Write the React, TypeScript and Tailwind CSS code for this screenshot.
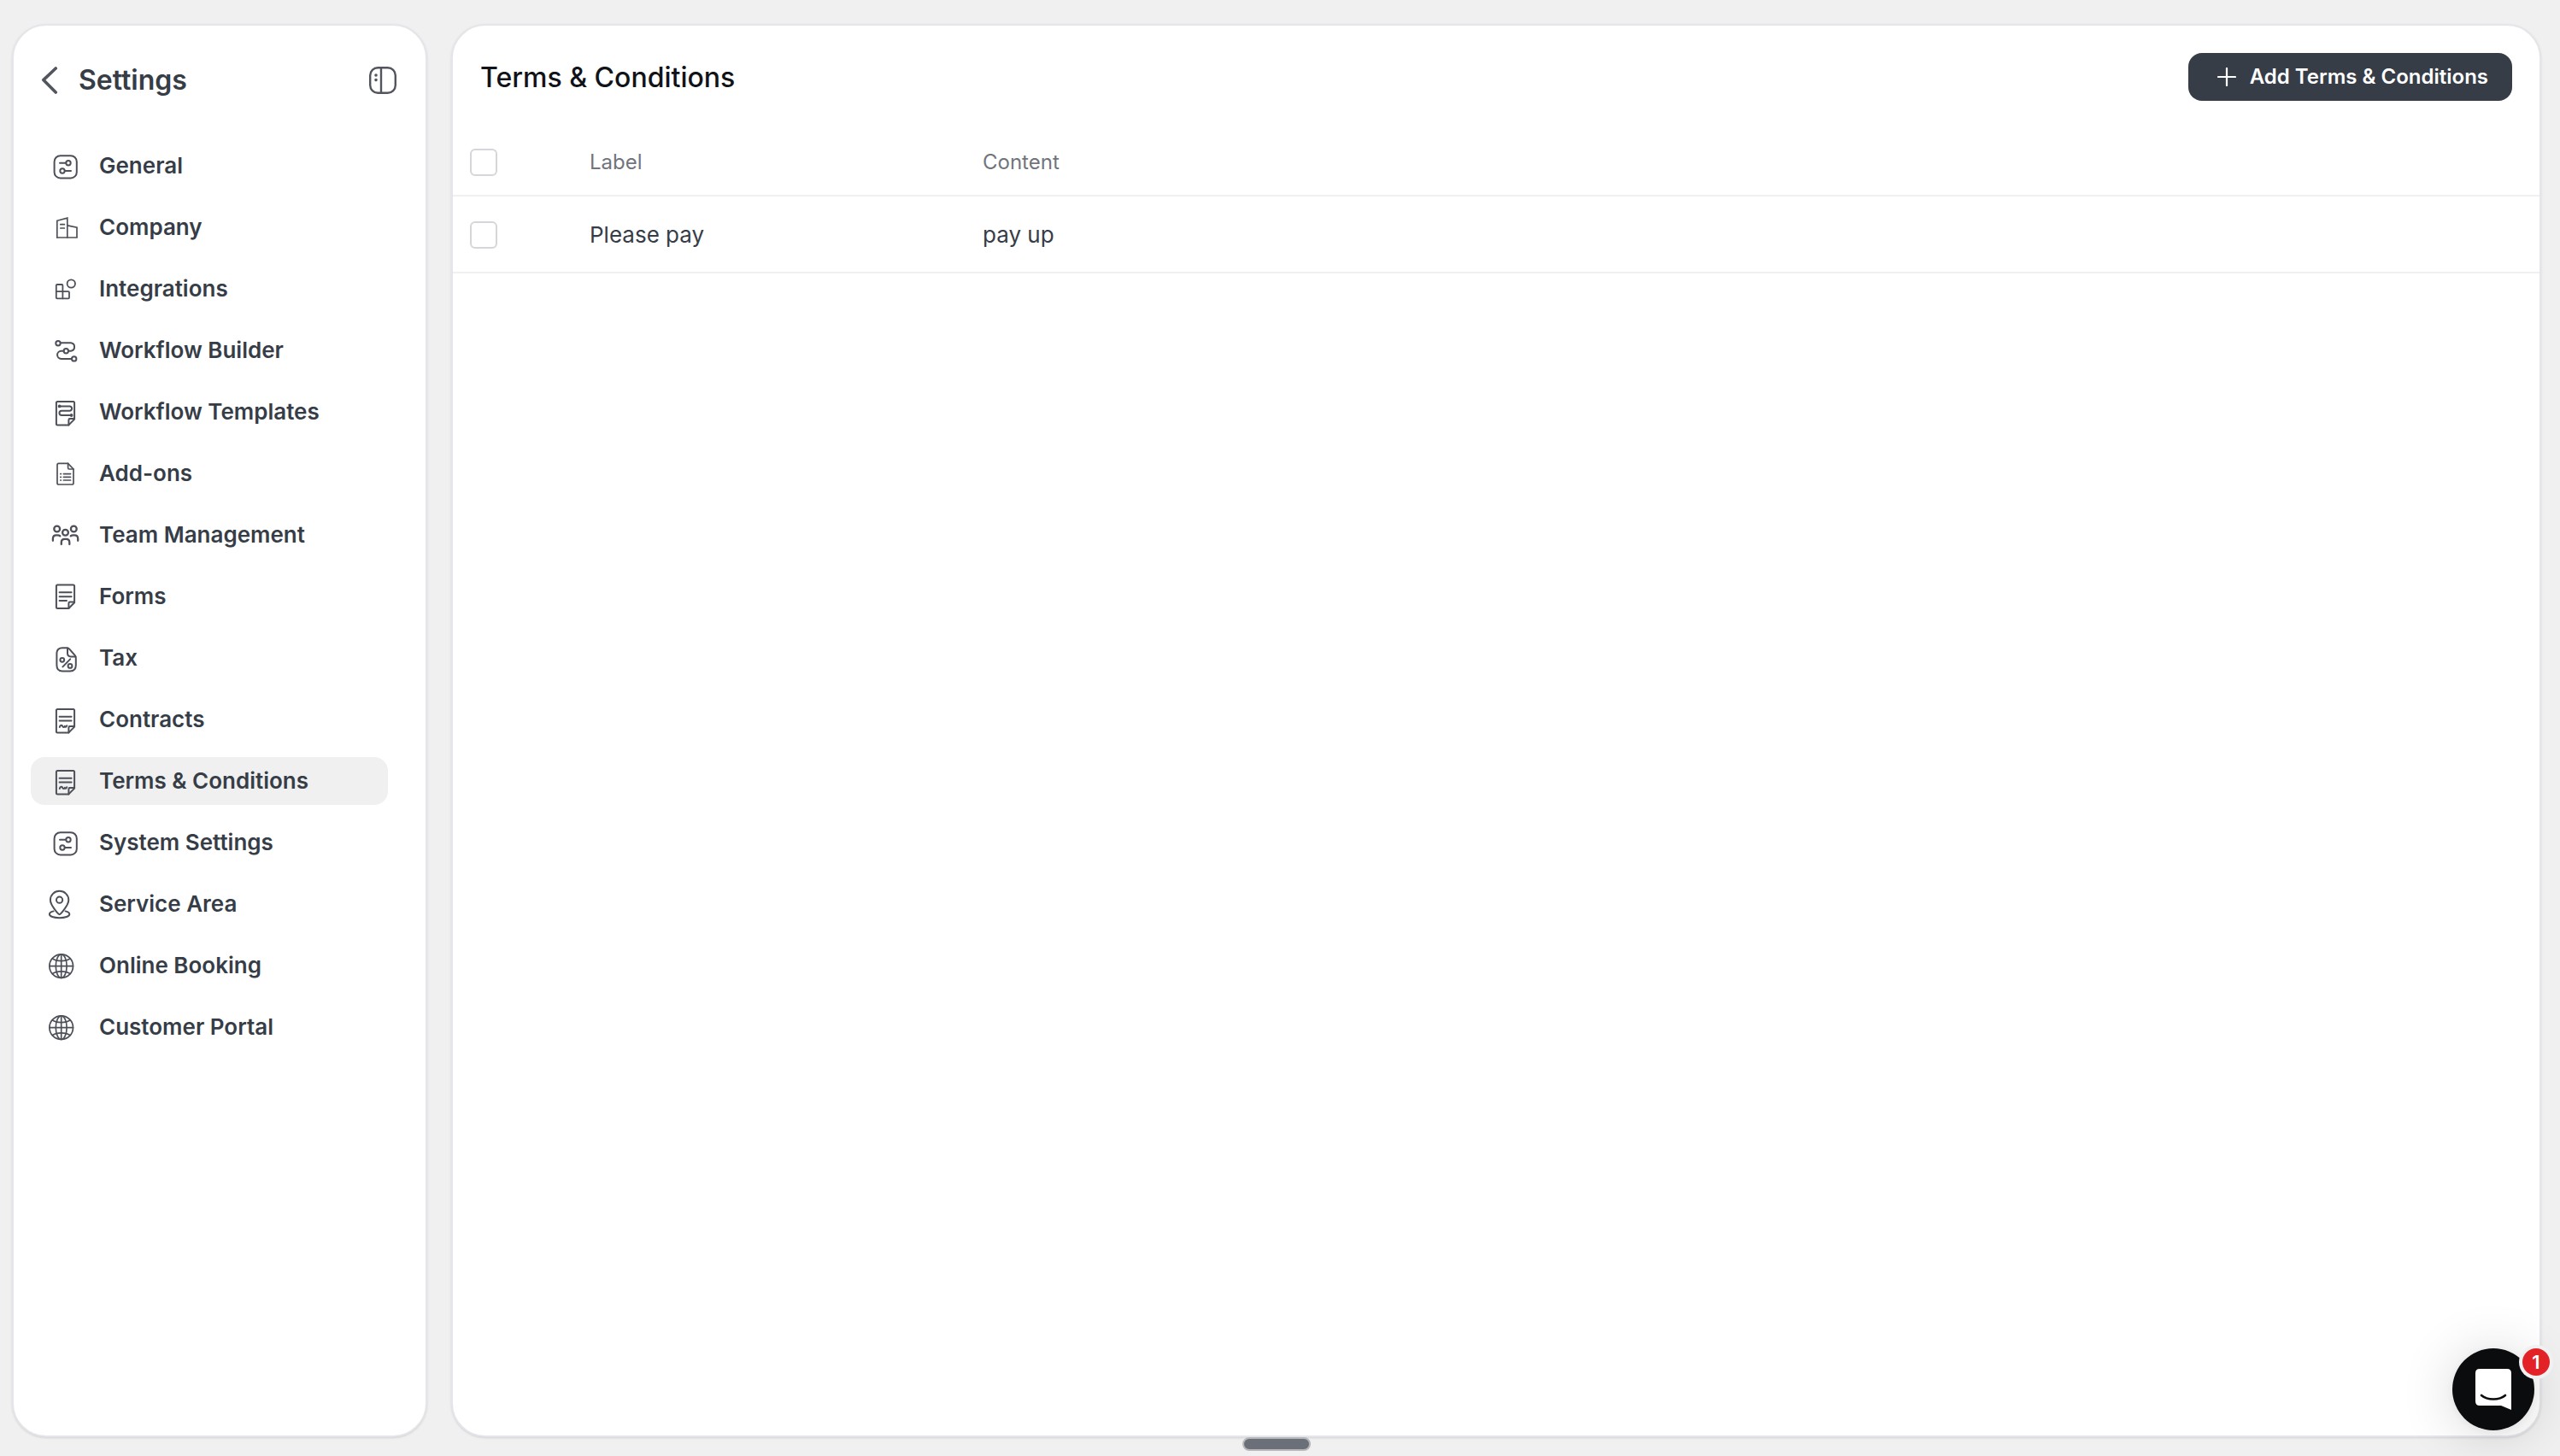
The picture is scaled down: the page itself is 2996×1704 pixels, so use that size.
import { useState } from "react";
import type { ReactNode } from "react";
import clsx from "clsx";

function Icon({ children }: { children: ReactNode }) {
    return (
        <svg
            viewBox="0 0 40 40"
            className="w-10 h-10 shrink-0 text-[#4d5059]"
            fill="none"
            stroke="currentColor"
            strokeWidth={2}
            strokeLinecap="round"
            strokeLinejoin="round"
            aria-hidden="true"
        >
            {children}
        </svg>
    );
}

// sheet of paper with a folded bottom right corner
function Sheet({ children }: { children: ReactNode }) {
    return (
        <>
            <path d="M11.4 8 H29.6 Q31.1 8 31.1 9.5 V28.6 L24.4 35.4 H11.4 Q9.9 35.4 9.9 33.9 V9.5 Q9.9 8 11.4 8 Z" />
            <path d="M24.4 35.4 V29.4 Q24.4 28 25.8 28 H31.1" />
            {children}
        </>
    );
}

function SlidersIcon() {
    return (
        <Icon>
            <rect x="7.6" y="8.2" width="26.2" height="26.2" rx="7" />
            <path d="M14 16.7 H21 M20 26 H27" />
            <circle cx="24" cy="16.7" r="2.7" />
            <circle cx="17" cy="26" r="2.7" />
        </Icon>
    );
}

function CompanyIcon() {
    return (
        <Icon>
            <g strokeWidth={1.7} strokeLinejoin="miter">
                <path d="M10.8 32 V12.3 L22.8 9.2 V32" />
                <path d="M22.8 17.8 L34 20.2 V32 H10.8" />
                <path d="M14.8 16.7 H19.4 M14.8 21 H19.4" />
            </g>
        </Icon>
    );
}

function IntegrationsIcon() {
    return (
        <Icon>
            <g strokeWidth={1.8}>
                <path d="M11 15 H16.4 Q17.4 15 17.4 16 V23.2 H24 Q25 23.2 25 24.2 V30.3 Q25 31.3 24 31.3 H11 Q9.8 31.3 9.8 30.3 V16 Q9.8 15 11 15 Z" />
                <path d="M9.8 23.2 H17.4 V31.3" />
                <circle cx="27.3" cy="14" r="4.7" />
            </g>
        </Icon>
    );
}

function WorkflowIcon() {
    return (
        <Icon>
            <circle cx="12" cy="11.7" r="2.7" />
            <circle cx="21.3" cy="20.8" r="2.7" />
            <circle cx="30.7" cy="29.9" r="2.7" />
            <path d="M14.8 11.3 H27 A4.8 4.8 0 0 1 27 20.8 H24.2" />
            <path d="M18.4 20.8 H15.6 A4.5 4.5 0 0 0 15.6 29.9 H27.8" />
        </Icon>
    );
}

function TemplatesIcon() {
    return (
        <Icon>
            <Sheet>
                <path d="M13.6 13.4 H25.9 A2.7 2.7 0 0 1 25.9 18.7 H16.1 A2.6 2.6 0 0 0 16.1 24 H27.4" />
                <circle cx="13.6" cy="13.4" r="0.9" fill="currentColor" />
                <circle cx="27.6" cy="24" r="0.9" fill="currentColor" />
            </Sheet>
        </Icon>
    );
}

function AddonsIcon() {
    return (
        <Icon>
            <g strokeWidth={1.7}>
                <path d="M12.6 8.4 H23.6 L30 15 V31.2 Q30 33 28.2 33 H12.6 Q11 33 11 31.2 V10.2 Q11 8.4 12.6 8.4 Z" />
                <path d="M23.6 8.4 V13.6 Q23.6 15 25 15 H30" />
                <path d="M18.4 20.6 H26.6 M18.4 24.3 H26.6 M18.4 28 H26.6 M14.8 20.6 H15.4 M14.8 24.3 H15.4 M14.8 28 H15.4" />
            </g>
        </Icon>
    );
}

function TeamIcon() {
    return (
        <Icon>
            <g strokeWidth={2.3}>
                <circle cx="10.7" cy="13" r="3.4" />
                <circle cx="30.3" cy="13" r="3.4" />
                <circle cx="20.5" cy="17.2" r="3.4" />
                <path d="M5.9 26.8 V24.4 Q5.9 20.4 9.9 20.4 H11.6 Q13.2 20.4 14.3 21.2" />
                <path d="M35.2 26.8 V24.4 Q35.2 20.4 31.2 20.4 H29.5 Q27.9 20.4 26.8 21.2" />
                <path d="M15.8 31 V28.8 Q15.8 24.9 19.7 24.9 H21.4 Q25.3 24.9 25.3 28.8 V31" />
            </g>
        </Icon>
    );
}

function FormsIcon() {
    return (
        <Icon>
            <g transform="translate(0 -1.4)">
                <Sheet>
                    <path d="M13.6 16.7 H27.6 M13.6 21.6 H27.6 M13.6 26.4 H22" />
                </Sheet>
            </g>
        </Icon>
    );
}

function TaxIcon() {
    return (
        <Icon>
            <path d="M17 8.2 H22.4 Q24 8.2 25 9.4 L31.6 16.8 Q32.8 18.2 32.8 20 V28.6 Q32.8 35.5 26 35.5 H17 Q10.4 35.5 10.4 28.6 V15 Q10.4 8.2 17 8.2 Z" />
            <path d="M23 8.6 V14.6 Q23 18.4 26.8 18.4 H32.4" />
            <circle cx="16.8" cy="22.3" r="2.4" />
            <circle cx="26" cy="29.4" r="2.4" />
            <path d="M26.2 21.4 L17.4 30.4" />
        </Icon>
    );
}

function ContractIcon() {
    return (
        <Icon>
            <Sheet>
                <path d="M13.6 16.8 H27.6 M13.6 21.6 H27.6" />
                <path d="M13.8 29 C14.2 26.8 16 26 17 27.6 C17.8 29.4 19.2 29.4 19.8 27.8 C20.4 29.2 21.6 29 22.2 27.2" />
            </Sheet>
        </Icon>
    );
}

function PinIcon() {
    return (
        <Icon>
            <path d="M13.6 32.2 C12.6 32.2 2.9 21.6 2.9 15.2 A10.7 10.4 0 0 1 24.3 15.2 C24.3 21.6 14.6 32.2 13.6 32.2 Z" />
            <circle cx="13.6" cy="15.2" r="3.6" />
            <path d="M6.6 28.4 C3.6 29.2 1.9 30.4 1.9 31.9 C1.9 34.4 7 36.2 13.6 36.2 C20.2 36.2 25.3 34.4 25.3 31.9 C25.3 30.4 23.6 29.2 20.6 28.4" />
        </Icon>
    );
}

function GlobeIcon() {
    return (
        <Icon>
            <g strokeWidth={1.7}>
                <circle cx="15.7" cy="20.7" r="13.8" />
                <ellipse cx="15.7" cy="20.7" rx="6.4" ry="13.8" />
                <path d="M15.7 6.9 V34.5 M1.9 20.7 H29.5" />
                <path d="M5.2 11.8 C8 13.8 11.5 14.6 15.7 14.6 C19.9 14.6 23.4 13.8 26.2 11.8" />
                <path d="M5.2 29.6 C8 27.6 11.5 26.8 15.7 26.8 C19.9 26.8 23.4 27.6 26.2 29.6" />
            </g>
        </Icon>
    );
}

const navItems = [
    { label: "General", icon: <SlidersIcon /> },
    { label: "Company", icon: <CompanyIcon /> },
    { label: "Integrations", icon: <IntegrationsIcon /> },
    { label: "Workflow Builder", icon: <WorkflowIcon /> },
    { label: "Workflow Templates", icon: <TemplatesIcon /> },
    { label: "Add-ons", icon: <AddonsIcon /> },
    { label: "Team Management", icon: <TeamIcon /> },
    { label: "Forms", icon: <FormsIcon /> },
    { label: "Tax", icon: <TaxIcon /> },
    { label: "Contracts", icon: <ContractIcon /> },
    { label: "Terms & Conditions", icon: <ContractIcon /> },
    { label: "System Settings", icon: <SlidersIcon /> },
    { label: "Service Area", icon: <PinIcon /> },
    { label: "Online Booking", icon: <GlobeIcon /> },
    { label: "Customer Portal", icon: <GlobeIcon /> },
];

const terms = [{ id: 1, label: "Please pay", content: "pay up" }];

function Sidebar() {
    const active = "Terms & Conditions";

    return (
        <aside className="w-[486px] shrink-0 bg-white border-2 border-[#e5e6eb] rounded-[40px] shadow-sm">
            <div className="flex items-center gap-6 px-8 pt-12">
                <button aria-label="Back" className="text-[#52555e]">
                    <svg viewBox="0 0 20 32" className="w-5 h-8" fill="none" stroke="currentColor" strokeWidth={3.6} strokeLinecap="round" strokeLinejoin="round">
                        <path d="M17.2 2 L2.8 15.6 L17.2 30" />
                    </svg>
                </button>
                <h2 className="flex-1 text-[32px] leading-8 font-semibold text-[#363d47]">Settings</h2>
                <button aria-label="Toggle sidebar" className="text-[#52555e]">
                    <svg viewBox="0 0 34 32" className="w-[34px] h-8" fill="none" stroke="currentColor" strokeWidth={2.4}>
                        <rect x="1.2" y="1.2" width="29.6" height="29.6" rx="9" />
                        <path d="M14 1 V31" />
                        <circle cx="8" cy="10" r="1" fill="currentColor" strokeWidth={1.6} />
                        <circle cx="8" cy="15.6" r="1" fill="currentColor" strokeWidth={1.6} />
                    </svg>
                </button>
            </div>
            <nav className="flex flex-col gap-4 pt-14 pl-5 pr-11">
                {navItems.map((item) => (
                    <a
                        key={item.label}
                        href="#"
                        className={clsx(
                            "flex items-center gap-5 h-14 pl-5 rounded-2xl text-[26px] leading-8 font-semibold text-[#363d47]",
                            item.label === active && "bg-[#f0f0f0]"
                        )}
                    >
                        {item.icon}
                        {item.label}
                    </a>
                ))}
            </nav>
        </aside>
    );
}

function Checkbox({ label, checked, onChange }: { label: string; checked: boolean; onChange: () => void }) {
    return (
        <input
            type="checkbox"
            aria-label={label}
            checked={checked}
            onChange={onChange}
            className="block w-8 h-8 appearance-none rounded-md border-2 border-[#d5d6da] bg-white checked:bg-[#363d47]"
        />
    );
}

function TermsTable() {
    const [selected, setSelected] = useState<number[]>([]);
    const allSelected = selected.length === terms.length;

    const toggle = (id: number) => {
        setSelected((prev) => (prev.includes(id) ? prev.filter((x) => x !== id) : [...prev, id]));
    };

    return (
        <table className="w-full table-fixed border-separate border-spacing-0 text-left">
            <thead>
                <tr className="h-20 text-2xl text-[#71747c]">
                    <th className="w-40 pl-5 pt-0.5 border-b-2 border-[#f0f0f0]">
                        <Checkbox
                            label="Select all"
                            checked={allSelected}
                            onChange={() => setSelected(allSelected ? [] : terms.map((t) => t.id))}
                        />
                    </th>
                    <th className="w-[460px] pt-0.5 font-normal border-b-2 border-[#f0f0f0]">Label</th>
                    <th className="pt-0.5 font-normal border-b-2 border-[#f0f0f0]">Content</th>
                </tr>
            </thead>
            <tbody>
                {terms.map((term) => (
                    <tr key={term.id} className="h-[90px] text-[26px] leading-8 text-[#363d47]">
                        <td className="pl-5 pt-0.5 border-b-2 border-[#f0f0f0]">
                            <Checkbox
                                label={`Select ${term.label}`}
                                checked={selected.includes(term.id)}
                                onChange={() => toggle(term.id)}
                            />
                        </td>
                        <td className="pt-0.5 border-b-2 border-[#f0f0f0]">{term.label}</td>
                        <td className="pt-0.5 border-b-2 border-[#f0f0f0]">{term.content}</td>
                    </tr>
                ))}
            </tbody>
        </table>
    );
}

function ChatLauncher() {
    return (
        <div className="fixed right-[30px] bottom-[30px]">
            <button
                aria-label="Open chat"
                className="flex items-center justify-center w-24 h-24 rounded-full bg-[#0b0c0e] shadow-[0_2px_12px_rgba(0,0,0,0.06),0_4px_64px_rgba(0,0,0,0.16)]"
            >
                <svg viewBox="0 0 42 48" className="w-[42px] h-12">
                    <path d="M5 0 H37 Q42 0 42 5 V48 L30 43 H5 Q0 43 0 38 V5 Q0 0 5 0 Z" fill="#fff" />
                    <path d="M7 31 C14 37 28 37 35 31" fill="none" stroke="#0b0c0e" strokeWidth={2.6} strokeLinecap="round" />
                </svg>
            </button>
            <span className="absolute -top-1 -right-[22px] flex items-center justify-center w-10 h-10 rounded-full bg-[#f1f1f1]">
                <span className="flex items-center justify-center w-8 h-8 rounded-full bg-[#e32227] text-[22px] leading-8 font-semibold text-white">
                    1
                </span>
            </span>
        </div>
    );
}

export default function App() {
    return (
        <div className="flex flex-col min-h-screen pt-7 pl-3.5 pr-[22px] bg-[#f0f0f0] font-['Inter',sans-serif]">
            <div className="flex flex-1 gap-7">
                <Sidebar />
                <main className="flex-1 min-w-0 bg-white border-2 border-[#e5e6eb] rounded-[40px] shadow-sm">
                    <div className="flex items-center justify-between h-[120px] px-8">
                        <h1 className="pt-0.5 text-[32px] leading-10 font-medium text-[#111319]">Terms &amp; Conditions</h1>
                        <button className="flex items-center gap-4 h-14 pl-[34px] pr-7 rounded-2xl bg-[#363d47] text-2xl font-semibold text-white">
                            <svg viewBox="0 0 22 22" className="w-[22px] h-[22px]" fill="none" stroke="currentColor" strokeWidth={2.2} strokeLinecap="round">
                                <path d="M11 1 V21 M1 11 H21" />
                            </svg>
                            Add Terms &amp; Conditions
                        </button>
                    </div>
                    <TermsTable />
                </main>
            </div>
            <div className="flex justify-center pb-1.5">
                <div className="w-20 h-4 rounded-full border-2 border-[#b5b7ba] bg-[#6b6f78]" />
            </div>
            <ChatLauncher />
        </div>
    );
}
